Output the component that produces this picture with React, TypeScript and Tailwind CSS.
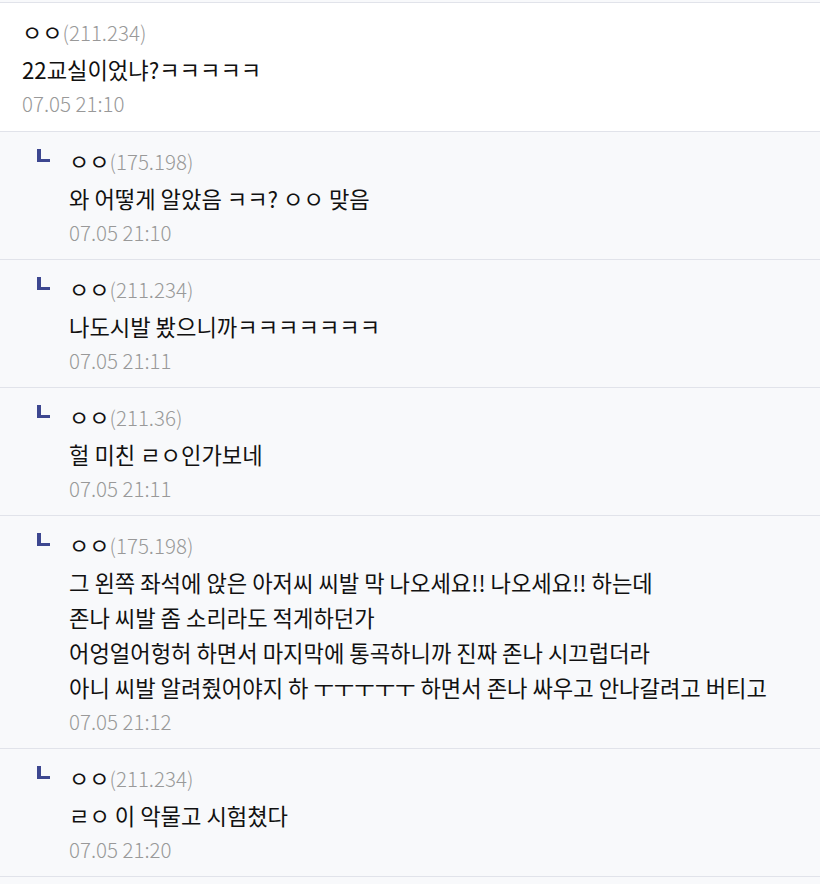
const font = { fontFamily: '"Noto Sans CJK KR", "Noto Sans", sans-serif' }

type Comment = {
  nick: string
  ip: string
  lines: string[]
  date: string
  reply?: boolean
}

const comments: Comment[] = [
  { nick: "ㅇㅇ", ip: "211.234", lines: ["22교실이었냐?ㅋㅋㅋㅋㅋ"], date: "07.05 21:10" },
  { nick: "ㅇㅇ", ip: "175.198", lines: ["와 어떻게 알았음 ㅋㅋ? ㅇㅇ 맞음"], date: "07.05 21:10", reply: true },
  { nick: "ㅇㅇ", ip: "211.234", lines: ["나도시발 봤으니까ㅋㅋㅋㅋㅋㅋㅋ"], date: "07.05 21:11", reply: true },
  { nick: "ㅇㅇ", ip: "211.36", lines: ["헐 미친 ㄹㅇ인가보네"], date: "07.05 21:11", reply: true },
  {
    nick: "ㅇㅇ",
    ip: "175.198",
    lines: [
      "그 왼쪽 좌석에 앉은 아저씨 씨발 막 나오세요!! 나오세요!! 하는데",
      "존나 씨발 좀 소리라도 적게하던가",
      "어엉얼어헝허 하면서 마지막에 통곡하니까 진짜 존나 시끄럽더라",
      "아니 씨발 알려줬어야지 하 ㅜㅜㅜㅜㅜ 하면서 존나 싸우고 안나갈려고 버티고",
    ],
    date: "07.05 21:12",
    reply: true,
  },
  { nick: "ㅇㅇ", ip: "211.234", lines: ["ㄹㅇ 이 악물고 시험쳤다"], date: "07.05 21:20", reply: true },
]

function CommentRow({ c }: { c: Comment }) {
  return (
    <li
      className={
        c.reply
          ? "flex border-b border-[#e1e3ea] bg-[#f8f9fb] pt-[10px] pb-[11px] pl-[37px]"
          : "flex border-b border-[#e1e3ea] bg-white pt-[10px] pb-[12px] pl-[22px]"
      }
    >
      {c.reply && (
        <div className="mt-[7px] mr-[19px] h-[13px] w-[13px] shrink-0 border-b-[3px] border-l-[4px] border-[#3d4790]" />
      )}
      <div className="min-w-0 flex-1">
        <div className="h-[36px] overflow-hidden text-[22px] leading-[36px] text-[#111]">
          {c.nick}
          <span className="text-[20.5px] leading-none font-light text-[#999]">({c.ip})</span>
        </div>
        <div className="mt-[3px] text-[22.2px] leading-[35px] text-[#111]">
          {c.lines.map((l, i) => (
            <p key={i}>{l}</p>
          ))}
        </div>
        <div className="h-[32px] text-[20.5px] leading-[32px] font-light text-[#999]">{c.date}</div>
      </div>
    </li>
  )
}

export default function App() {
  return (
    <div className="min-h-[884px] bg-[#f8f9fb] pt-[2px]" style={font}>
      <ul className="border-t border-[#e1e3ea]">
        {comments.map((c, i) => (
          <CommentRow key={i} c={c} />
        ))}
      </ul>
    </div>
  )
}
